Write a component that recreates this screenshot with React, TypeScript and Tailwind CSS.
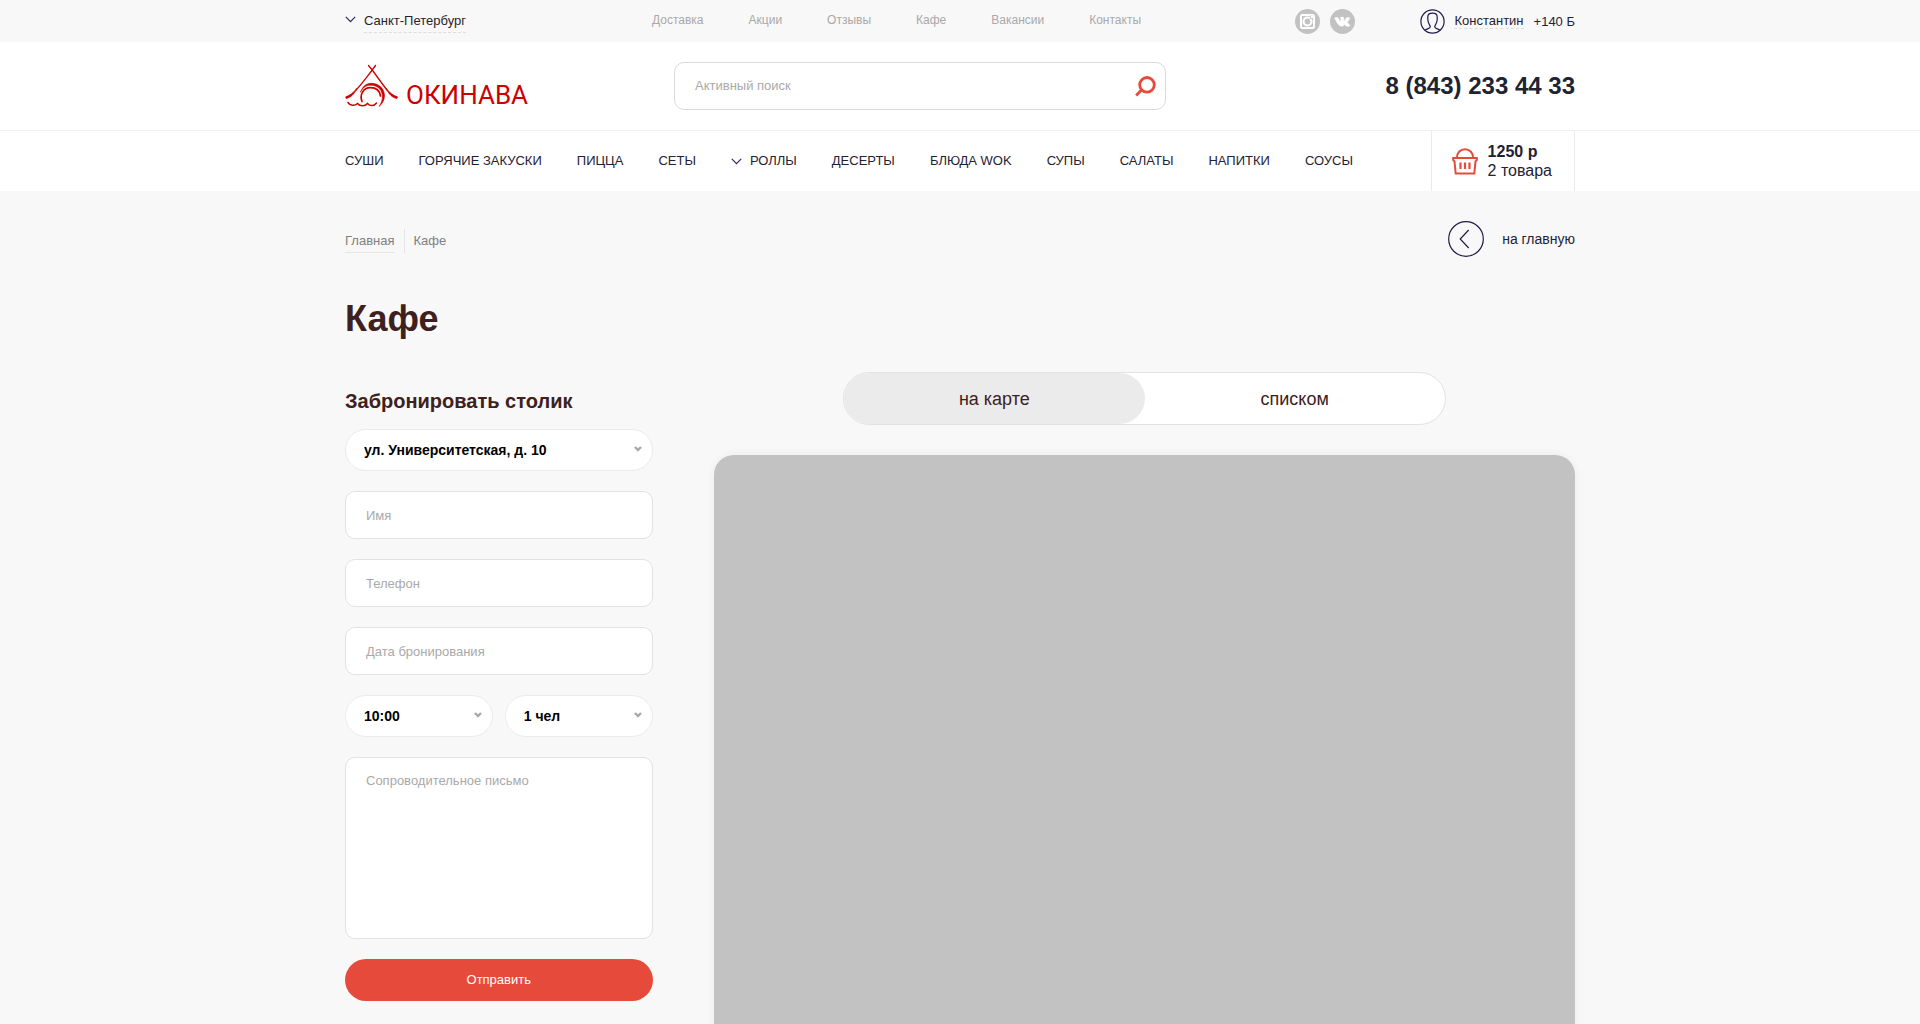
import React from "react";

const topLinks = ["Доставка", "Акции", "Отзывы", "Кафе", "Вакансии", "Контакты"];

const menu = [
  "СУШИ",
  "ГОРЯЧИЕ ЗАКУСКИ",
  "ПИЦЦА",
  "СЕТЫ",
  "РОЛЛЫ",
  "ДЕСЕРТЫ",
  "БЛЮДА WOK",
  "СУПЫ",
  "САЛАТЫ",
  "НАПИТКИ",
  "СОУСЫ",
];

function Container({ className = "", children }: { className?: string; children: React.ReactNode }) {
  return <div className={`mx-auto w-full max-w-[1230px] ${className}`}>{children}</div>;
}

function Chevron() {
  return (
    <svg width="11" height="7" viewBox="0 0 11 7" fill="none" stroke="#33245e" strokeWidth="1.200" className="shrink-0" aria-hidden="true">
      <path d="M0.8 0.8 5.5 5.6 10.2 0.8" />
    </svg>
  );
}

function Logo() {
  return (
    <a href="#" className="flex items-end gap-2 text-[#cc0000]">
      <svg width="53" height="44" viewBox="0 0 53 44" fill="none" stroke="currentColor" strokeLinecap="round" aria-hidden="true">
        <path d="M23.500 1.500 28 7C33 14 38 21 42 26" strokeWidth="1.300" />
        <path d="M30.500 1.500 26.500 7C21 14 16 21 11 26" strokeWidth="1.300" />
        <path d="M12 24.500C8 29 5 31.500 .8 32.800L1 34.400C6 33.800 9 30 12 24.500Z" fill="currentColor" strokeWidth="0.800" />
        <path d="M41 24.500C45 29 48 31.500 52.400 32.800L52 34.400C47 33.800 44 30 41 24.500Z" fill="currentColor" strokeWidth="0.800" />
        <path d="M15.500 28C18 21.500 22 19.300 26.500 19.300C34 19.300 39.700 25 39.500 32C39.400 36.500 37 40 34 42.500C36.500 39 37.500 36 37.400 32C37.200 26 33 21.700 26.500 21.300C22 21 18.500 22.500 15.500 28Z" fill="currentColor" strokeWidth="0.600" />
        <path d="M17 37.500C14.500 31 18 23.700 25.500 23.700C31 23.700 34.700 27 35.500 32" strokeWidth="1.700" />
        <path d="M3 38.500C5 41.800 9.500 42.300 12.500 39.500C15 42.500 20 42.500 22.500 39.500C25 42.500 29 42.300 31.500 39" strokeWidth="1.500" />
      </svg>
      <span className="font-['Roboto',sans-serif] text-[26px] leading-[25px]">ОКИНАВА</span>
    </a>
  );
}

function InstagramIcon() {
  return (
    <svg width="25" height="25" viewBox="0 0 25 25" aria-hidden="true">
      <circle cx="12.500" cy="12.500" r="12.500" fill="#c2c2c2" />
      <rect x="6" y="6" width="13" height="13" rx="1.500" fill="none" stroke="#fff" strokeWidth="2" />
      <circle cx="12.500" cy="12.500" r="4" fill="none" stroke="#fff" strokeWidth="2.200" />
      <rect x="15" y="6.500" width="3.200" height="3.200" fill="#c2c2c2" />
      <rect x="15.700" y="6.500" width="2.500" height="2.500" fill="#fff" />
    </svg>
  );
}

function VkIcon() {
  return (
    <svg width="25" height="25" viewBox="0 0 25 25" aria-hidden="true">
      <circle cx="12.500" cy="12.500" r="12.500" fill="#c2c2c2" />
      <path
        fill="#fff"
        stroke="#fff"
        strokeWidth="0.400"
        d="M12 17.300h1c.6-.1.400-1.500 1-1.700.7-.2 1.500 1.200 2.400 1.700h2.700c1-.2.900-1 .2-1.900-.6-.8-1.500-1.400-2.100-2.100.4-.9 2-2.500 2.600-4 .1-.5-.1-.7-.6-.7h-2.400c-.4 0-.6.200-.8.600-.5 1.200-1.200 2.400-1.900 2.700-.7-.6.100-2.500-.4-3.500-.5-.6-2.700-.5-3.400 0-.3.200-.2.400.1.500.8.300.6 2.600.3 3.100-.8.200-1.900-2-2.400-3-.2-.3-.4-.4-.7-.4H5.300c-.5 0-.7.200-.5.700 1.300 3 3.400 8 7.200 8Z"
      />
    </svg>
  );
}

function UserIcon() {
  return (
    <svg width="25" height="25" viewBox="0 0 25 25" fill="none" stroke="#221a48" strokeWidth="1.200" aria-hidden="true">
      <circle cx="12.500" cy="12.500" r="11.600" />
      <path d="M5 21.200C7 19.700 10.300 19.600 10.300 17.800C10.300 16 7.800 14.500 7.800 10.500V8C7.800 5.500 9.500 4.200 12.500 4.200C15.500 4.200 17.200 5.500 17.200 8V10.500C17.200 14.500 14.700 16 14.700 17.800C14.700 19.600 18 19.700 20 21.200" />
    </svg>
  );
}

function BasketIcon() {
  return (
    <svg width="26" height="27" viewBox="0 0 26 27" fill="none" stroke="#e64a3b" strokeWidth="2" aria-hidden="true">
      <path d="M5 9.500C5 4.500 8.500 1.200 13 1.200S21 4.500 21 9.500" />
      <path d="M1.200 10H24.800V12L23.500 13.500 22.300 25.500H3.700L2.500 13.500 1.200 12Z" />
      <path d="M8.500 14.500V21M13 14.500V21M17.500 14.500V21" strokeWidth="2.200" />
    </svg>
  );
}

function Select({ label, value }: { label: string; value: string }) {
  return (
    <div className="relative min-w-0 flex-1">
      <select
        aria-label={label}
        className="block h-[42px] w-full appearance-none rounded-full border border-[#ebebeb] bg-white pr-8 pl-[18px] text-sm font-bold text-black"
      >
        <option>{value}</option>
      </select>
      <svg
        width="8"
        height="6"
        viewBox="0 0 8 6"
        fill="none"
        stroke="#a8a8a8"
        strokeWidth="2.400"
        className="pointer-events-none absolute top-[17px] right-[11px]"
        aria-hidden="true"
      >
        <path d="M1 1 4 4 7 1" />
      </svg>
    </div>
  );
}

const fieldClass =
  "block w-full rounded-[10px] border border-[#e2e2e2] bg-white px-5 text-[13px] text-[#3e2020] placeholder:text-[#a9a9a9]";

export default function App() {
  return (
    <div className="min-h-screen bg-[#f8f8f8] font-['Liberation_Sans',Arial,sans-serif] text-[#1f2233]">
      <header>
        <Container className="grid h-[42px] grid-cols-[307px_1fr_280px]">
          <div className="flex h-[38px] items-center gap-2">
            <Chevron />
            <a href="#" className="border-b border-dashed border-[#dddddd] pt-2 pb-1 text-[13px] leading-[15px] text-[#2b1f2b]">
              Санкт-Петербург
            </a>
          </div>
          <nav className="flex h-10 items-center gap-[45px] text-xs text-[#a9a9a9]">
            {topLinks.map((t) => (
              <a key={t} href="#">
                {t}
              </a>
            ))}
          </nav>
          <div className="flex h-[42px] items-center justify-between">
            <div className="flex gap-[10px]">
              <a href="#" aria-label="Instagram">
                <InstagramIcon />
              </a>
              <a href="#" aria-label="VK">
                <VkIcon />
              </a>
            </div>
            <div className="flex h-10 items-center text-[13px] leading-[15px]">
              <UserIcon />
              <a href="#" className="ml-[9px] border-b border-dashed border-[#dddddd]">
                Константин
              </a>
              <span className="ml-[10px]">+140 Б</span>
            </div>
          </div>
        </Container>

        <div className="bg-white">
          <Container className="flex h-[88px] items-center">
            <div className="w-[329px]">
              <Logo />
            </div>
            <form className="flex h-12 w-2/5 items-center rounded-[10px] border border-[#d9d9d9] pr-[9px] pl-5">
              <input
                aria-label="Активный поиск"
                placeholder="Активный поиск"
                className="min-w-0 flex-1 text-[13px] outline-none placeholder:text-[#a9a9a9]"
              />
              <button type="button" aria-label="Найти">
                <svg width="21" height="21" viewBox="0 0 21 21" fill="none" stroke="#e64a3b" strokeWidth="2.800" aria-hidden="true">
                  <circle cx="12" cy="8.800" r="7.300" />
                  <path d="M6.700 13.800 1.200 19.500" />
                </svg>
              </button>
            </form>
            <a href="tel:88432334433" className="ml-auto text-2xl font-bold text-[#1f2433]">
              8 (843) 233 44 33
            </a>
          </Container>

          <div className="border-t border-[#f0f0f0]">
            <Container className="flex h-[60px] items-center justify-between">
              <nav className="flex items-center gap-[35px] text-[13px]">
                {menu.map((t) => (
                  <a key={t} href="#" className="flex items-center gap-2 whitespace-nowrap">
                    {t === "РОЛЛЫ" && <Chevron />}
                    {t}
                  </a>
                ))}
              </nav>
              <a href="#" className="flex h-full items-center gap-[10px] border-x border-[#ebebeb] pr-[22px] pl-5 leading-[19px]">
                <BasketIcon />
                <span>
                  <b className="block">1250 р</b>
                  <span className="block">2 товара</span>
                </span>
              </a>
            </Container>
          </div>
        </div>
      </header>

      <main>
        <Container>
          <div className="flex items-center justify-between pt-[30px]">
            <div className="flex items-center pt-1 text-[13px] leading-[15px] text-[#808080]">
              <a href="#" className="border-b border-[#e5e5e5] py-1">
                Главная
              </a>
              <span className="ml-[10px] border-l border-[#e5e5e5] pt-1 pb-[5px] pl-2">Кафе</span>
            </div>
            <a href="#" className="flex items-center gap-[18px] text-sm">
              <svg width="36" height="36" viewBox="0 0 36 36" fill="none" stroke="#221a48" strokeWidth="1.200" aria-hidden="true">
                <circle cx="18" cy="18" r="17.300" />
                <path d="M20.700 9 12.200 18 20.700 27" />
              </svg>
              на главную
            </a>
          </div>

          <h1 className="mt-[42px] text-4xl font-bold text-[#3e2020]">Кафе</h1>

          <div className="mt-[33px] flex justify-between">
            <form className="flex w-1/4 flex-col">
              <h2 className="mt-[15px] mb-[14px] text-xl leading-7 font-bold text-[#3e2020]">Забронировать столик</h2>
              <div className="flex flex-col gap-5">
                <div className="flex">
                  <Select label="Адрес" value="ул. Университетская, д. 10" />
                </div>
                <input aria-label="Имя" placeholder="Имя" className={`h-12 ${fieldClass}`} />
                <input aria-label="Телефон" placeholder="Телефон" className={`h-12 ${fieldClass}`} />
                <input aria-label="Дата бронирования" placeholder="Дата бронирования" className={`h-12 ${fieldClass}`} />
                <div className="flex gap-3">
                  <Select label="Время" value="10:00" />
                  <Select label="Количество человек" value="1 чел" />
                </div>
                <textarea
                  aria-label="Сопроводительное письмо"
                  placeholder="Сопроводительное письмо"
                  className={`h-[182px] resize-none pt-[13px] ${fieldClass}`}
                />
                <button type="button" className="h-[42px] rounded-full bg-[#e64a3b] text-[13px] text-white">
                  Отправить
                </button>
              </div>
            </form>

            <section className="w-[70%]">
              <div className="mx-auto flex h-[53px] w-[70%] rounded-full border border-[#e2e2e2] bg-white text-lg text-[#3e2020]">
                <button type="button" className="flex-1 rounded-full bg-[#ebebeb]">
                  на карте
                </button>
                <button type="button" className="flex-1 rounded-full">
                  списком
                </button>
              </div>
              <div className="mt-[30px] h-[600px] rounded-[20px] bg-[#c2c2c2] shadow-[0_0_10px_rgba(0,0,0,0.06)]" />
            </section>
          </div>
        </Container>
      </main>
    </div>
  );
}
